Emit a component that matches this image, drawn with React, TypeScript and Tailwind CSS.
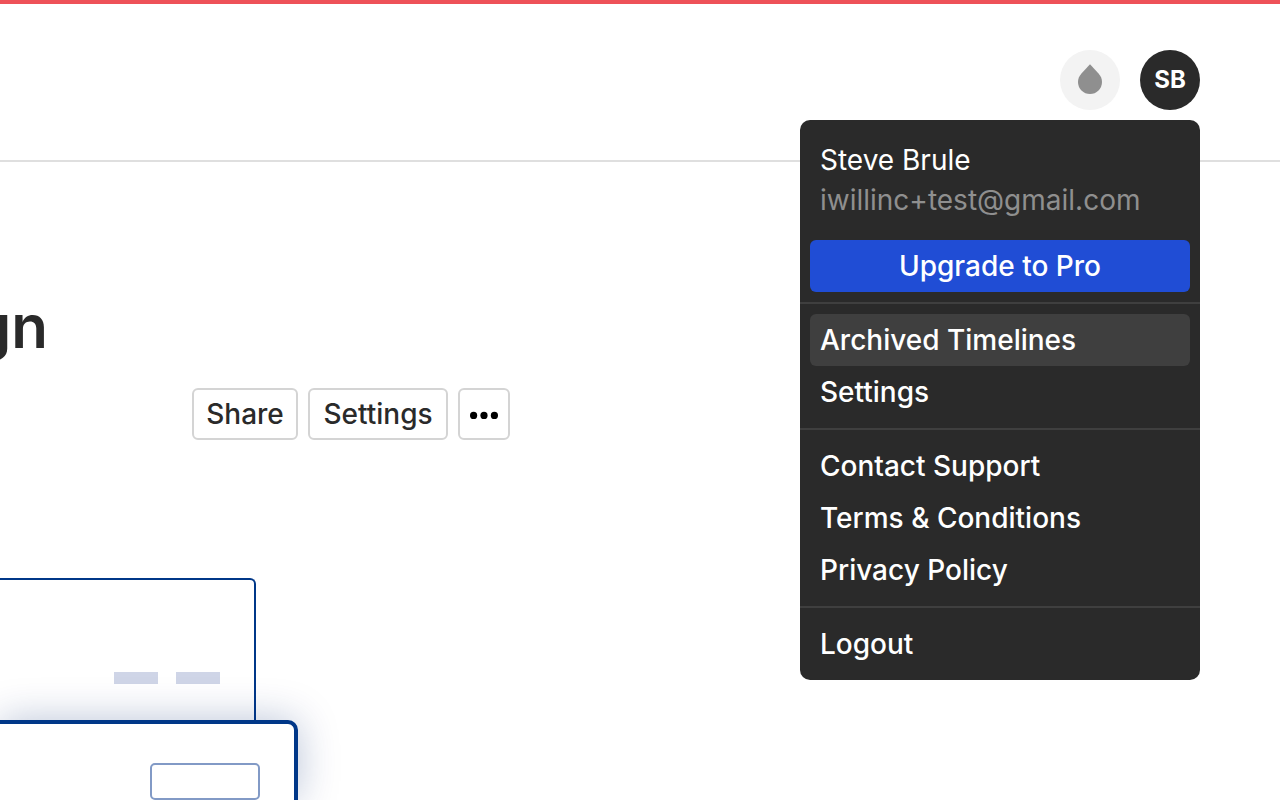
import React from "react";

const menuGroups: { label: string; active?: boolean }[][] = [
  [{ label: "Archived Timelines", active: true }, { label: "Settings" }],
  [{ label: "Contact Support" }, { label: "Terms & Conditions" }, { label: "Privacy Policy" }],
  [{ label: "Logout" }],
];

function MenuLink({ label, active }: { label: string; active?: boolean }) {
  return (
    <a
      href="#"
      className={`block rounded-md px-2.5 py-1.5 text-[28px] leading-10 font-medium text-white ${
        active ? "bg-[#3f3f3f]" : "hover:bg-[#3f3f3f]"
      }`}
    >
      {label}
    </a>
  );
}

function AccountMenu() {
  return (
    <div className="absolute top-full right-0 z-10 mt-2.5 w-[400px] rounded-[10px] bg-[#2a2a2a] pt-5 text-[28px] leading-10">
      <div className="px-5">
        <p className="text-white">Steve Brule</p>
        <p className="text-[#8f8f8f]">iwillinc+test@gmail.com</p>
      </div>
      <div className="px-2.5 pt-5 pb-2.5">
        <button type="button" className="block w-full rounded-md bg-[#204dd5] py-1.5 font-medium text-white">
          Upgrade to Pro
        </button>
      </div>
      {menuGroups.map((group) => (
        <nav key={group[0].label} className="border-t-2 border-[#3f3f3f] p-2.5">
          {group.map((item) => (
            <MenuLink key={item.label} label={item.label} active={item.active} />
          ))}
        </nav>
      ))}
    </div>
  );
}

function Header() {
  return (
    <header className="flex justify-end border-t-4 border-b-2 border-t-[#ee5158] border-b-[#dfdfdf] px-20 pt-[46px] pb-[50px]">
      <div className="relative flex gap-5">
        <button
          type="button"
          aria-label="Theme"
          className="flex size-[60px] items-center justify-center rounded-full bg-[#f3f3f3]"
        >
          <svg width="24" height="32" viewBox="0 0 24 32" fill="#8f8f8f" aria-hidden="true">
            <path d="M12 0.2 L20.3 9.2 C23 12.2 24 14.6 24 18 A12 12 0 0 1 0 18 C0 14.6 1 12.2 3.7 9.2 Z" />
          </svg>
        </button>
        <button
          type="button"
          className="flex size-[60px] items-center justify-center rounded-full bg-[#2a2a2a] text-2xl font-bold text-white"
        >
          SB
        </button>
        <AccountMenu />
      </div>
    </header>
  );
}

const toolButton =
  "flex h-[52px] items-center justify-center rounded-md border-2 border-[#d4d4d4] bg-white text-[28px] font-medium text-[#2a2a2a]";

function Preview() {
  return (
    <div className="flex flex-1 flex-col">
      <div className="flex h-[142px] w-64 items-end justify-end gap-[18px] rounded-tr-md border-t-2 border-r-2 border-[#003788] pr-[34px] pb-9">
        <span className="h-3 w-11 bg-[#cfd5e7]" />
        <span className="h-3 w-11 bg-[#cfd5e7]" />
      </div>
      <div className="relative flex w-[298px] flex-1 justify-end rounded-tr-[10px] border-t-4 border-r-4 border-[#003788] bg-white pt-[39px] pr-[34px] shadow-[0_0_40px_rgba(0,40,110,0.28)]">
        <span className="h-[37px] w-[110px] rounded-[5px] border-2 border-[#829ac6]" />
      </div>
    </div>
  );
}

export default function App() {
  return (
    <div className="flex min-h-screen flex-col overflow-hidden bg-white font-['Inter',sans-serif]">
      <Header />
      <main className="flex flex-1 flex-col">
        <h1 className="mt-[126px] flex w-12 justify-end overflow-hidden text-[60px] leading-[76px] font-semibold text-[#2a2a2a]">
          gn
        </h1>
        <div className="mt-6 mb-[138px] flex gap-2.5 pl-48">
          <button type="button" className={`${toolButton} w-[106px]`}>
            Share
          </button>
          <button type="button" className={`${toolButton} w-[140px]`}>
            Settings
          </button>
          <button type="button" aria-label="More" className={`${toolButton} w-[52px]`}>
            <svg width="28" height="10" viewBox="0 0 28 10" fill="#000" aria-hidden="true">
              <circle cx="3.6" cy="6.4" r="3.6" />
              <circle cx="14" cy="6.4" r="3.6" />
              <circle cx="24.4" cy="6.4" r="3.6" />
            </svg>
          </button>
        </div>
        <Preview />
      </main>
    </div>
  );
}
